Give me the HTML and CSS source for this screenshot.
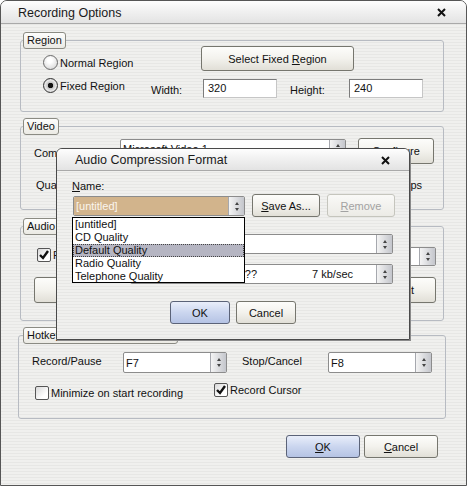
FILE: index.html
```html
<!DOCTYPE html>
<html lang="en">
<head>
    <meta charset="UTF-8">
    <title>Recording Options</title>
    <link rel="stylesheet" href="styles.css">
</head>
<body>
<div class="window">
    <div class="titlebar">
        <span class="title">Recording Options</span>
        <svg class="close" viewBox="0 0 9 9"><path d="M1 1 L8 8 M8 1 L1 8"/></svg>
    </div>

    <div class="content">
        <fieldset class="group region">
            <legend>Region</legend>
            <div class="row region-top">
                <label class="radio-label w-normal"><span class="radio"></span>Normal Region</label>
                <button class="btn select-btn">Select Fixed <u>R</u>egion</button>
            </div>
            <div class="row region-size">
                <label class="radio-label w-fixed"><span class="radio checked"></span>Fixed Region</label>
                <span class="label w-width">Width:</span>
                <div class="textbox">320</div>
                <span class="label w-height">Height:</span>
                <div class="textbox">240</div>
            </div>
        </fieldset>

        <fieldset class="group video">
            <legend>Video</legend>
            <div class="row video-codec">
                <span class="label w-comp">Compressor:</span>
                <div class="combo combo-codec"><span class="combo-value">Microsoft Video 1</span><span class="spin"></span></div>
                <button class="btn configure-btn">Configure</button>
            </div>
            <div class="row video-quality">
                <span class="label w-quality">Quality:</span>
                <span class="label fps">15 fps</span>
            </div>
        </fieldset>

        <fieldset class="group audio">
            <legend>Audio</legend>
            <div class="row audio-record">
                <label class="check-label w-audio"><span class="check"><svg viewBox="0 0 12 12"><path d="M2 6 L5 9 L10 2"/></svg></span>Record audio</label>
                <div class="combo combo-device"><span class="combo-value"></span><span class="spin"></span></div>
            </div>
            <div class="row audio-buttons">
                <button class="btn audio-btn">Device</button>
                <button class="btn audio-btn right">Format</button>
            </div>
        </fieldset>

        <fieldset class="group hotkeys">
            <legend>Hotkeys</legend>
            <div class="row hotkey-keys">
                <span class="label w-record">Record/Pause</span>
                <div class="combo combo-key"><span class="combo-value">F7</span><span class="spin"></span></div>
                <span class="label w-stop">Stop/Cancel</span>
                <div class="combo combo-key"><span class="combo-value">F8</span><span class="spin"></span></div>
            </div>
            <div class="row hotkey-options">
                <label class="check-label w-minimize"><span class="check"></span>Minimize on start recording</label>
                <label class="check-label"><span class="check"><svg viewBox="0 0 12 12"><path d="M2 6 L5 9 L10 2"/></svg></span>Record Cursor</label>
            </div>
        </fieldset>

        <div class="footer">
            <button class="btn default"><u>O</u>K</button>
            <button class="btn"><u>C</u>ancel</button>
        </div>
    </div>

    <!-- format chooser opened from the audio group -->
    <div class="dialog">
        <div class="titlebar dialog-titlebar">
            <span class="title">Audio Compression Format</span>
            <svg class="close" viewBox="0 0 9 9"><path d="M1 1 L8 8 M8 1 L1 8"/></svg>
        </div>
        <div class="dialog-body">
            <div class="label name-label"><u>N</u>ame:</div>
            <div class="row name-row">
                <div class="combo combo-name"><span class="combo-value">[untitled]</span><span class="spin"></span></div>
                <button class="btn small-btn"><u>S</u>ave As...</button>
                <button class="btn small-btn" disabled><u>R</u>emove</button>
            </div>
            <div class="row format-row">
                <span class="label w-format"></span>
                <div class="combo combo-wide"><span class="combo-value"></span><span class="spin"></span></div>
            </div>
            <div class="row attr-row">
                <span class="label w-format"></span>
                <div class="combo combo-wide">
                    <span class="combo-value"><span class="attr-name">???</span><span class="attr-rate">7 kb/sec</span></span>
                    <span class="spin"></span>
                </div>
            </div>
            <div class="dialog-buttons">
                <button class="btn default">OK</button>
                <button class="btn">Cancel</button>
            </div>

            <div class="droplist">
                <div>[untitled]</div>
                <div>CD Quality</div>
                <div class="sel">Default Quality</div>
                <div>Radio Quality</div>
                <div>Telephone Quality</div>
            </div>
        </div>
    </div>
</div>
</body>
</html>
```

FILE: styles.css
```css
* {
    box-sizing: border-box;
}
body {
    margin: 0;
    background: #fff;
    color: #111;
    font-family: "Liberation Sans", Arial, sans-serif;
    font-size: 11px;
}

/* window frame */
.window {
    position: relative;
    width: 467px;
    height: 486px;
    border: 1px solid #565656;
    border-radius: 7px 7px 0 0;
    background: repeating-linear-gradient(#f0f0ee 0 2px, #e7e7e5 2px 3px);
    overflow: hidden;
}
.titlebar {
    display: flex;
    align-items: center;
    height: 23px;
    padding: 1px 20px 0 17px;
    border-bottom: 1px solid #a9a9a9;
    background: linear-gradient(#fefefe, #f1f1f1 45%, #e3e3e3);
}
.title {
    flex: 1;
    font-size: 12.5px;
    color: #1a1a1a;
}
.close {
    width: 9px;
    height: 9px;
}
.close path {
    stroke: #111;
    stroke-width: 2;
    fill: none;
}
.content {
    padding: 8px 22px 0 19px;
}

/* group boxes */
.group {
    margin: 0;
    padding: 0;
    min-width: 0;
    border: 1px solid #b7bbc2;
    border-radius: 3px;
}
.group legend {
    height: 17px;
    margin-left: 2px;
    padding: 0 3px;
    border: 1px solid #8b8b83;
    border-radius: 3px;
    background: linear-gradient(#fdfdfc, #ebeae4);
    line-height: 15px;
}
.row {
    display: flex;
}
.label {
    line-height: 13px;
    white-space: nowrap;
}

/* region */
.region {
    padding-bottom: 12px;
}
.region-top {
    height: 25px;
    margin-top: -3px;
}
.w-normal {
    width: 158px;
    margin-left: 22px;
    margin-top: 9px;
}
.select-btn {
    width: 153px;
    height: 25px;
}
.region-size {
    height: 21px;
    margin-top: 7px;
}
.w-fixed {
    width: 108px;
    margin-left: 22px;
}
.w-width {
    width: 52px;
    margin-top: 6px;
}
.w-height {
    width: 59px;
    margin-left: 13px;
    margin-top: 6px;
}
.textbox {
    width: 74px;
    height: 19px;
    margin-top: 1px;
    padding: 2px 0 0 4px;
    border: 1px solid;
    border-color: #7c7c7c #c6c6c6 #c6c6c6 #7c7c7c;
    background: #fff;
    line-height: 13px;
}

/* video */
.video {
    margin-top: 6px;
    padding-bottom: 11px;
}
.video-codec {
    height: 26px;
    margin-top: 3px;
}
.w-comp {
    width: 86px;
    margin-left: 13px;
    margin-top: 9px;
}
.combo-codec {
    width: 226px;
    height: 19px;
    margin-top: 1px;
    border-left-color: #333;
}
.configure-btn {
    width: 76px;
    height: 26px;
    margin-left: 12px;
}
.video-quality {
    height: 26px;
    margin-top: 8px;
}
.w-quality {
    margin-left: 15px;
    margin-top: 7px;
}
.fps {
    margin-left: auto;
    margin-right: 21px;
    margin-top: 7px;
}

/* audio */
.audio {
    margin-top: 8px;
    padding-bottom: 17px;
}
.audio-record {
    height: 20px;
    margin-top: 11px;
}
.w-audio {
    margin-left: 16px;
    margin-top: 1px;
}
.combo-device {
    width: 200px;
    height: 19px;
    margin: 1px 7px 0 auto;
}
.audio-buttons {
    height: 26px;
    margin-top: 11px;
}
.audio-btn {
    width: 144px;
    margin-left: 13px;
}
.audio-btn.right {
    margin: 0 7px 0 auto;
    padding-right: 21px;
    text-align: right;
}

/* hotkeys */
.hotkeys {
    margin: 6px -2px 0;
    padding-bottom: 19px;
}
.hotkeys legend {
    width: 155px;
    margin-left: 4px;
}
.hotkey-keys {
    height: 21px;
    margin-top: 8px;
}
.w-record {
    width: 91px;
    margin-left: 13px;
    margin-top: 3px;
}
.w-stop {
    width: 86px;
    margin-left: 15px;
    margin-top: 3px;
}
.combo-key {
    width: 104px;
    height: 21px;
}
.hotkey-options {
    height: 17px;
    margin-top: 9px;
}
.w-minimize {
    width: 179px;
    margin-left: 16px;
    margin-top: 3px;
}

.footer {
    display: flex;
    justify-content: flex-end;
    gap: 4px;
    margin: 16px 6px 0 0;
}
.footer .btn {
    width: 74px;
    height: 23px;
}

/* controls */
.btn {
    padding: 0;
    font: inherit;
    color: #111;
    border: 1px solid #76766e;
    border-radius: 3px;
    background: linear-gradient(#fdfdfb, #f3f2ed 50%, #e1dfd7);
}
.btn.default {
    border-color: #5b6378;
    background: linear-gradient(#e9eefa, #cbd6ef 50%, #b5c3e4);
}
.btn:disabled {
    color: #a2a2a2;
    border-color: #c5c5bd;
    background: linear-gradient(#f9f9f7, #ecebe6);
}
.radio-label,
.check-label {
    display: flex;
    align-items: center;
    gap: 2px;
    height: 15px;
    white-space: nowrap;
}
.radio {
    width: 15px;
    height: 15px;
    border: 1px solid #6a6a6a;
    border-radius: 50%;
    background: radial-gradient(circle at 45% 35%, #fff 20%, #d4d4d4 90%);
}
.radio.checked {
    border-color: #333;
    background: radial-gradient(circle, #111 0 2.5px, #c4c4c4 3px, #e8e8e8 60%, #b0b0b0 100%);
}
.check {
    display: flex;
    align-items: center;
    justify-content: center;
    width: 14px;
    height: 14px;
    border: 1px solid #555;
    border-radius: 2px;
    background: linear-gradient(135deg, #d8d8d8, #fff 70%);
}
.check svg {
    width: 12px;
    height: 12px;
}
.check path {
    fill: none;
    stroke: #111;
    stroke-width: 2.4;
}
.combo {
    display: flex;
    border: 1px solid #8c8c8c;
    border-radius: 2px;
    background: #fff;
    overflow: hidden;
}
.combo-value {
    flex: 1;
    display: flex;
    align-items: center;
    padding-left: 2px;
    white-space: nowrap;
    overflow: hidden;
}
.spin {
    display: flex;
    flex-direction: column;
    align-items: center;
    justify-content: center;
    gap: 3px;
    width: 16px;
    border-left: 1px solid #a6a8ae;
    background: linear-gradient(to right, #f4f4f4, #c4c6cc);
}
.spin::before,
.spin::after {
    content: "";
    border-left: 2px solid transparent;
    border-right: 2px solid transparent;
}
.spin::before {
    border-bottom: 3px solid #444;
}
.spin::after {
    border-top: 3px solid #444;
}

/* audio compression dialog */
.dialog {
    position: absolute;
    left: 55px;
    top: 147px;
    width: 354px;
    height: 192px;
    border: 1px solid #4a4a4a;
    border-radius: 6px 6px 0 0;
    background: repeating-linear-gradient(#f0f0ee 0 2px, #e7e7e5 2px 3px);
    box-shadow: 1px 1px 0 #8a8a8a;
}
.dialog-titlebar {
    height: 22px;
    padding: 1px 19px 0 18px;
    border-radius: 5px 5px 0 0;
}
.dialog-body {
    position: relative;
    padding: 9px 0 0 15px;
}
.name-row {
    height: 23px;
    margin-top: 1px;
}
.combo-name {
    width: 172px;
    height: 20px;
    margin: 2px 0 0 1px;
}
.combo-name .combo-value {
    background: #d2b48c;
    color: #fbf6ee;
}
.small-btn {
    width: 68px;
    height: 23px;
    margin-left: 7px;
}
.format-row {
    height: 20px;
    margin-top: 17px;
}
.attr-row {
    height: 20px;
    margin-top: 10px;
}
.w-format {
    width: 58px;
    margin-top: 4px;
}
.combo-wide {
    width: 263px;
}
.attr-name {
    width: 124px;
    text-align: right;
}
.attr-rate {
    margin-left: auto;
    margin-right: 23px;
}
.dialog-buttons {
    display: flex;
    justify-content: center;
    gap: 6px;
    margin: 17px 0 0 -15px;
}
.dialog-buttons .btn {
    width: 60px;
    height: 23px;
}
.droplist {
    position: absolute;
    left: 15px;
    top: 46px;
    width: 173px;
    height: 66px;
    border: 1px solid #000;
    background: #fff;
}
.droplist div {
    height: 13px;
    padding-left: 2px;
    line-height: 13px;
}
.droplist .sel {
    background: #b5b5c2;
    outline: 1px dotted #444;
    outline-offset: -1px;
}
```
